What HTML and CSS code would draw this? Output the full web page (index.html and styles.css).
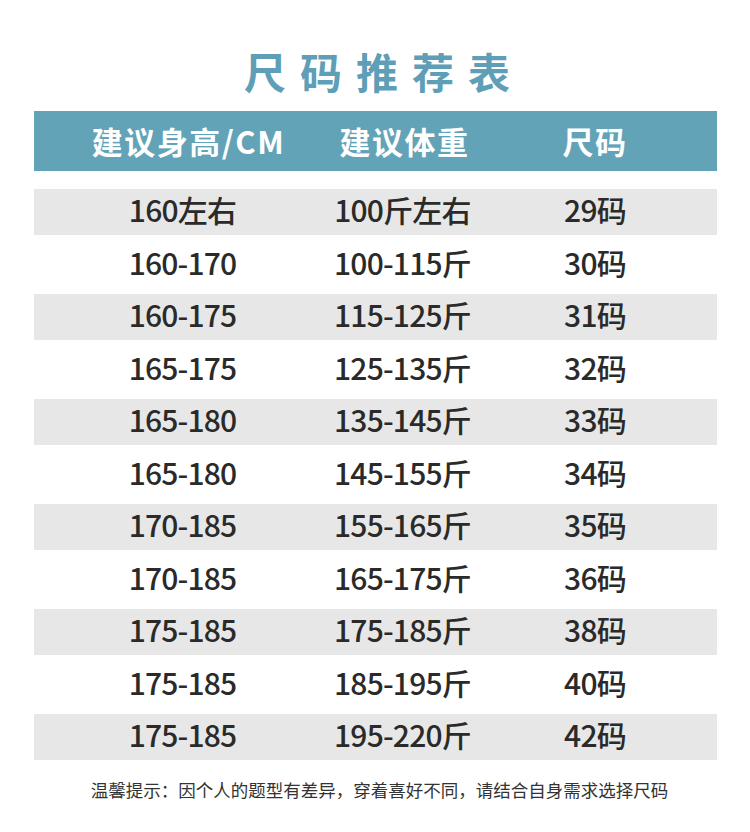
FILE: index.html
```html
<!DOCTYPE html>
<html lang="zh-CN">
<head>
<meta charset="utf-8">
<title>尺码推荐表</title>
<link rel="stylesheet" href="styles.css">
</head>
<body>
<main class="page">
  <h1 class="title">尺码推荐表</h1>
  <div class="head">
    <div class="cell c1">建议身高/CM</div>
    <div class="cell">建议体重</div>
    <div class="cell">尺码</div>
  </div>
  <div class="rows">
    <div class="row alt"><div class="cell">160左右</div><div class="cell">100斤左右</div><div class="cell">29码</div></div>
    <div class="row"><div class="cell">160-170</div><div class="cell">100-115斤</div><div class="cell">30码</div></div>
    <div class="row alt"><div class="cell">160-175</div><div class="cell">115-125斤</div><div class="cell">31码</div></div>
    <div class="row"><div class="cell">165-175</div><div class="cell">125-135斤</div><div class="cell">32码</div></div>
    <div class="row alt"><div class="cell">165-180</div><div class="cell">135-145斤</div><div class="cell">33码</div></div>
    <div class="row"><div class="cell">165-180</div><div class="cell">145-155斤</div><div class="cell">34码</div></div>
    <div class="row alt"><div class="cell">170-185</div><div class="cell">155-165斤</div><div class="cell">35码</div></div>
    <div class="row"><div class="cell">170-185</div><div class="cell">165-175斤</div><div class="cell">36码</div></div>
    <div class="row alt"><div class="cell">175-185</div><div class="cell">175-185斤</div><div class="cell">38码</div></div>
    <div class="row"><div class="cell">175-185</div><div class="cell">185-195斤</div><div class="cell">40码</div></div>
    <div class="row alt"><div class="cell">175-185</div><div class="cell">195-220斤</div><div class="cell">42码</div></div>
  </div>
  <p class="note">温馨提示：因个人的题型有差异，穿着喜好不同，请结合自身需求选择尺码</p>
</main>
</body>
</html>
```

FILE: styles.css
```css
html, body {
  margin: 0;
  padding: 0;
  background: #ffffff;
}

body {
  font-family: "Noto Sans CJK SC", "Noto Sans", sans-serif;
  color: #2b2b2b;
}

.page {
  width: 750px;
  padding-top: 50px;
  display: flex;
  flex-direction: column;
  align-items: center;
}

.title {
  margin: 0 0 19px;
  font-size: 42px;
  line-height: 42px;
  font-weight: 700;
  letter-spacing: 14px;
  padding-left: 18px;
  color: #5e9fb7;
  text-align: center;
}

.head,
.row {
  width: 683px;
  display: grid;
  grid-template-columns: 298px 142px 243px;
  align-items: center;
  justify-items: center;
}

.head {
  height: 60px;
  box-sizing: border-box;
  padding-bottom: 2px;
  background: #63a3b8;
  color: #ffffff;
  font-size: 31px;
  font-weight: 700;
  letter-spacing: 1.5px;
  margin-bottom: 18px;
}

.head .c1 {
  padding-left: 12px;
}

.head .cell:nth-child(2) {
  padding-left: 4px;
}

.cell {
  white-space: nowrap;
  line-height: 1;
}

.rows {
  display: flex;
  flex-direction: column;
  gap: 6.5px;
}

.row {
  height: 46px;
  box-sizing: border-box;
  padding-bottom: 6px;
  font-size: 30px;
  font-weight: 500;
  letter-spacing: -0.8px;
  color: #2a2a2a;
}

.row.alt {
  background: #e7e7e7;
}

.note {
  margin: 21px 0 0;
  padding-left: 9px;
  font-size: 17.5px;
  line-height: 18px;
  color: #333333;
  text-align: center;
}
```
